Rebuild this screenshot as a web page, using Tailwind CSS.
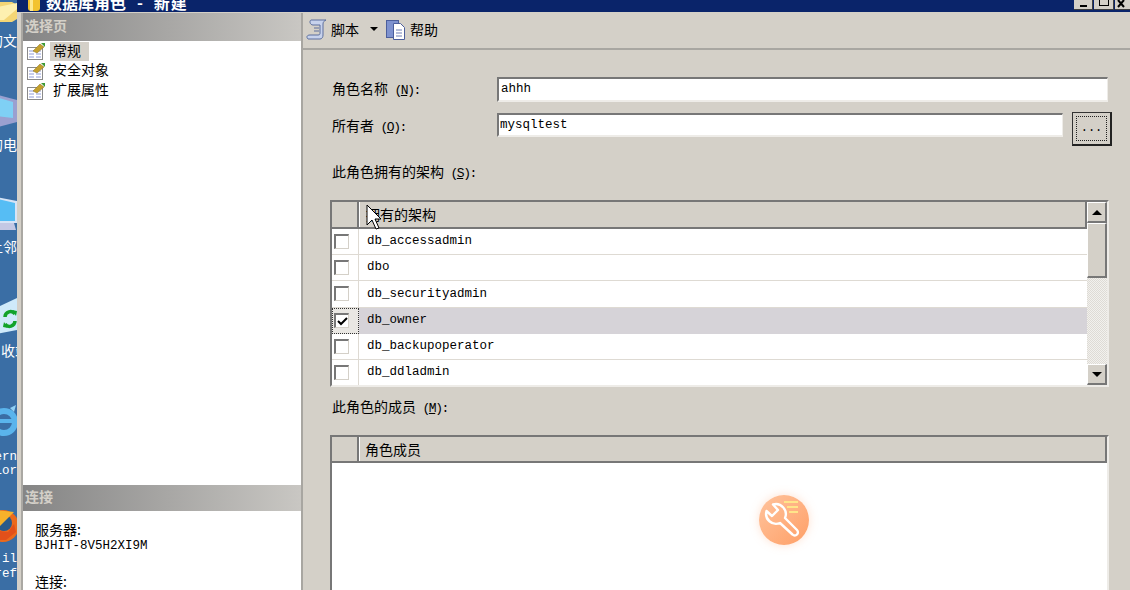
<!DOCTYPE html>
<html lang="zh-CN">
<head>
    <meta charset="UTF-8">
    <meta name="viewport" content="width=device-width" />
    <script src="https://cdn.jsdelivr.net/npm/@tailwindcss/browser@4"></script>
    <title>数据库角色 - 新建</title>
</head>
<body class="w-[1130px] h-[590px] overflow-hidden flex bg-[#d4d0c8] text-[14px] text-black font-['Noto_Sans_CJK_SC','Liberation_Sans',sans-serif]">

<!-- Desktop behind the window -->
<div class="relative w-[17px] h-full shrink-0 overflow-hidden bg-[#3a6ea5] text-white text-[14px] leading-[16px]">
    <svg class="absolute left-0 top-0" width="17" height="24" viewBox="0 0 17 24"><path d="M-8 2h20l5 3v14l-5 3H-8z" fill="#f4d675"/><path d="M-8 8 17 3v6L4 20H-8z" fill="#fdf0b0"/></svg>
    <span class="absolute right-0 top-[32px] whitespace-nowrap">的文</span>
    <svg class="absolute left-0 top-[92px]" width="17" height="40" viewBox="0 0 17 40"><path d="M-6 2 17 8v22L-6 36z" fill="#9aa0d0"/><path d="M-4 5 13 10v16L-4 24z" fill="#7fd0f5"/></svg>
    <span class="absolute right-0 top-[136px] whitespace-nowrap">的电</span>
    <svg class="absolute left-0 top-[195px]" width="17" height="40" viewBox="0 0 17 40"><path d="M-4 2 17 6v22H-4z" fill="#d7e4f6"/><path d="M-2 4 15 8v18H-2z" fill="#56bdf4"/><path d="M-6 28h20l2 7H-6z" fill="#c4c8e4"/></svg>
    <span class="absolute right-0 top-[238px] whitespace-nowrap">上邻</span>
    <svg class="absolute left-0 top-[298px]" width="17" height="38" viewBox="0 0 17 38"><path d="M-4 10 17 0v32L-4 36z" fill="#cfeafa"/><path d="M5 19a5.500 5.500 0 0 1 10-3M15 23a5.500 5.500 0 0 1-10 3" fill="none" stroke="#12a32a" stroke-width="3.500"/><path d="M12 12l5 1-1 5zM8 30l-5-1 1-5z" fill="#12a32a"/></svg>
    <span class="absolute left-[1px] top-[342px] whitespace-nowrap">收站</span>
    <svg class="absolute left-0 top-[403px]" width="17" height="38" viewBox="0 0 17 38"><circle cx="4" cy="19" r="11" fill="none" stroke="#5ab4ec" stroke-width="6"/><path d="M-4 18h17" stroke="#5ab4ec" stroke-width="4"/><path d="M10 5l6-3-2 7z" fill="#8fd0f5"/></svg>
    <div class="absolute right-0 top-[450px] font-['Liberation_Mono',monospace] text-[12.500px] leading-[14px] text-right"><div>ern</div><div>lor</div></div>
    <svg class="absolute left-0 top-[506px]" width="17" height="40" viewBox="0 0 17 40"><circle cx="3" cy="20" r="16" fill="#ec6a1c"/><circle cx="4" cy="17" r="8" fill="#2a5a8a"/><path d="M-6 4 14 6 8 12-2 22z" fill="#f7b12a"/><path d="M-8 24 8 26 14 18 16 26 6 34H-8z" fill="#e2501a"/></svg>
    <div class="absolute right-0 top-[552px] font-['Liberation_Mono',monospace] text-[12.500px] leading-[15px] text-right"><div>il</div><div>ref</div></div>
</div>

<!-- Dialog window -->
<div class="relative w-[1113px] h-full flex flex-col pl-[6px] bg-[#d4d0c8]">
    <!-- Title bar, cut off by the top of the picture -->
    <div class="h-[12px] -ml-[6px] mb-[1px] pl-[10px] flex justify-between overflow-hidden bg-[#0a246a] text-white">
        <div class="flex items-center gap-[5px] h-[20px] -mt-[8px] shrink-0">
            <svg width="14" height="20" viewBox="0 0 14 20"><rect x="1" y="0" width="12" height="19" rx="3" fill="#f2c230"/><rect x="3" y="0" width="3" height="19" fill="#fde890"/></svg>
            <span class="font-bold text-[16px] whitespace-pre">数据库角色   -   <span class="tracking-[1px]">新建</span></span>
        </div>
        <div class="flex gap-[1px] h-[10px] self-start shrink-0">
            <div class="w-[19px] h-[10px] bg-[#d4d0c8] border-r border-b border-[#404040] flex justify-center"><div class="w-[7px] h-[2px] mt-[5px] bg-black"></div></div>
            <div class="w-[20px] h-[10px] bg-[#d4d0c8] border-r border-b border-[#404040] flex justify-center"><div class="w-[10px] h-[6px] border-x border-b border-black"></div></div>
            <div class="w-[15px] h-[10px] bg-[#d4d0c8] border-b border-[#404040]"><svg width="15" height="9" viewBox="0 0 15 9"><path d="M3 0l6 7M9 0 3 7" stroke="#000" stroke-width="2"/></svg></div>
        </div>
    </div>

    <div class="flex-1 min-h-0 flex">
        <!-- Left pane -->
        <div class="w-[280px] -ml-[2px] shrink-0 flex flex-col bg-white border-l-2 border-[#aaa8a3]">
            <div class="h-[28px] pl-[2px] pb-[4px] flex items-center font-bold text-[14px] text-[#d4d0c8] bg-gradient-to-r from-[#858585] to-[#c9c7c3]">选择页</div>
            <ul class="flex-1 pl-[4px]">
                <li class="h-[20px] flex items-center">
                    <svg width="19" height="18" viewBox="0 0 19 18"><rect x="0.500" y="5.500" width="15" height="12" fill="#fff" stroke="#8a8a8a"/><path d="M2 9h5M9 9h5M2 12h5M9 12h5M2 15h5M9 15h5" stroke="#8f9bd8"/><path d="M6 9 13 2l4 3-7 6z" fill="#c4a02c" stroke="#8a7020" stroke-width="0.500"/><path d="M14 1h4v4z" fill="#3c9a35"/></svg>
                    <span class="ml-[4px] w-[39px] h-[19px] pl-[3px] leading-[17px] bg-[#d4d0c8]">常规</span>
                </li>
                <li class="h-[20px] flex items-center">
                    <svg width="19" height="18" viewBox="0 0 19 18"><rect x="0.500" y="5.500" width="15" height="12" fill="#fff" stroke="#8a8a8a"/><path d="M2 9h5M9 9h5M2 12h5M9 12h5M2 15h5M9 15h5" stroke="#8f9bd8"/><path d="M6 9 13 2l4 3-7 6z" fill="#c4a02c" stroke="#8a7020" stroke-width="0.500"/><path d="M14 1h4v4z" fill="#3c9a35"/></svg>
                    <span class="ml-[7px] mb-[3px] leading-[17px]">安全对象</span>
                </li>
                <li class="h-[20px] flex items-center">
                    <svg width="19" height="18" viewBox="0 0 19 18"><rect x="0.500" y="5.500" width="15" height="12" fill="#fff" stroke="#8a8a8a"/><path d="M2 9h5M9 9h5M2 12h5M9 12h5M2 15h5M9 15h5" stroke="#8f9bd8"/><path d="M6 9 13 2l4 3-7 6z" fill="#c4a02c" stroke="#8a7020" stroke-width="0.500"/><path d="M14 1h4v4z" fill="#3c9a35"/></svg>
                    <span class="ml-[7px] mb-[3px] leading-[17px]">扩展属性</span>
                </li>
            </ul>
            <div class="h-[26px] pl-[2px] pb-[4px] flex items-center font-bold text-[14px] text-[#d4d0c8] bg-gradient-to-r from-[#858585] to-[#c9c7c3]">连接</div>
            <div class="h-[79px] pl-[12px] pt-[9px]">
                <div class="leading-[18px]">服务器:</div>
                <div class="pt-[1px] font-['Liberation_Mono',monospace] text-[12.500px] leading-[14px]">BJHIT-8V5H2XI9M</div>
                <div class="mt-[19px] leading-[18px]">连接:</div>
            </div>
        </div>

        <!-- Right pane -->
        <div class="flex-1 min-w-0 border-l-2 border-[#a8a6a1] flex flex-col">
            <!-- Toolbar -->
            <div class="h-[37px] shrink-0 pl-[3px] pb-[3px] flex items-center border-b-2 border-[#a8a6a1]">
                <svg width="21" height="21" viewBox="0 0 21 21"><path d="M5 1h15c-2 1-3 2-3 4v11c0 2-1 4-3 4H2c-2-2-1-4 2-4h8c2 0 2-1 2-2V6H7C4 6 3 2 5 1z" fill="#c7d2ec" stroke="#5c6f9e"/><path d="M8 9h5M8 12h5" stroke="#5c6f9e"/></svg>
                <span class="ml-[4px]">脚本</span>
                <span class="ml-[11px] w-0 h-0 border-x-[4px] border-x-transparent border-t-[4px] border-t-black"></span>
                <svg class="ml-[8px]" width="21" height="21" viewBox="0 0 21 21"><rect x="0.500" y="1.500" width="12" height="17" fill="#7e92cf" stroke="#4c5f9c"/><path d="M7.500 4.500h7l4 4v12h-11z" fill="#fff" stroke="#4c5f9c"/><path d="M10 11h6M10 14h6M10 17h6" stroke="#6e7fb5"/></svg>
                <span class="ml-[3px]">帮助</span>
            </div>

            <div class="flex-1 min-h-0 overflow-hidden pl-[29px] pr-[22px]">
                <!-- Name and owner fields -->
                <div class="h-[25px] mt-[27px] flex items-center">
                    <label class="w-[165px] shrink-0 whitespace-pre pb-[1px]">角色名称<span class="font-['Liberation_Mono',monospace] text-[13px] tracking-[-1.400px]"> (<span class="underline">N</span>):</span></label>
                    <div class="flex-1 h-[25px] pl-[2px] flex items-center bg-white border-t-2 border-l-2 border-t-[#777] border-l-[#777] border-r border-b-2 border-r-[#eeece8] border-b-[#eeece8] font-['Liberation_Mono',monospace] text-[12.500px]">ahhh</div>
                </div>
                <div class="relative h-[24px] mt-[11px] pr-[45px] flex items-center">
                    <label class="w-[165px] shrink-0 whitespace-pre pt-[3px]">所有者<span class="font-['Liberation_Mono',monospace] text-[13px] tracking-[-1.400px]"> (<span class="underline">O</span>):</span></label>
                    <div class="flex-1 h-[24px] pl-[1px] flex items-center bg-white border-t-2 border-l-2 border-t-[#777] border-l-[#777] border-r border-b-2 border-r-[#eeece8] border-b-[#eeece8] font-['Liberation_Mono',monospace] text-[12.500px]">mysqltest</div>
                    <button class="absolute right-[-4px] top-[-1px] w-[40px] h-[34px] p-[3px] bg-[#d4d0c8] border-t border-l border-[#333] border-r-2 border-b-2 border-r-[#222] border-b-[#222]">
                        <span class="block w-full h-full border border-dotted border-[#222] text-[12px] leading-[22px] text-center font-['Liberation_Mono',monospace]">...</span>
                    </button>
                </div>

                <div class="h-[20px] mt-[24px] leading-[20px] whitespace-pre">此角色拥有的架构<span class="font-['Liberation_Mono',monospace] text-[13px] tracking-[-1.400px]"> (<span class="underline">S</span>):</span></div>

                <!-- Owned schemas -->
                <div class="mt-[19px] h-[187px] w-[779px] -ml-[2px] flex border-t-2 border-l-2 border-t-[#777] border-l-[#777] border-r-2 border-b-2 border-r-[#eeece8] border-b-[#eeece8] bg-white">
                    <div class="flex-1 min-w-0">
                        <div class="h-[27px] flex bg-[#d4d0c8] border-b-2 border-[#777]">
                            <div class="w-[27px] border-r-2 border-[#777]"></div>
                            <div class="flex-1 pl-[6px] border-l border-white border-r-2 border-r-[#777] leading-[24px]">拥有的架构</div>
                        </div>
                        <div class="h-[26.200px] flex items-center border-b border-[#dedad3]">
                            <div class="w-[27px] h-full pl-[2px] flex items-center border-r border-[#dedad3]"><span class="w-[15px] h-[15px] bg-white border-t-2 border-l-2 border-t-[#777] border-l-[#777] border-r border-b border-[#d4d0c8]"></span></div>
                            <span class="pl-[8px] font-['Liberation_Mono',monospace] text-[12.500px]">db_accessadmin</span>
                        </div>
                        <div class="h-[26.200px] flex items-center border-b border-[#dedad3]">
                            <div class="w-[27px] h-full pl-[2px] flex items-center border-r border-[#dedad3]"><span class="w-[15px] h-[15px] bg-white border-t-2 border-l-2 border-t-[#777] border-l-[#777] border-r border-b border-[#d4d0c8]"></span></div>
                            <span class="pl-[8px] font-['Liberation_Mono',monospace] text-[12.500px]">dbo</span>
                        </div>
                        <div class="h-[26.200px] flex items-center border-b border-[#dedad3]">
                            <div class="w-[27px] h-full pl-[2px] flex items-center border-r border-[#dedad3]"><span class="w-[15px] h-[15px] bg-white border-t-2 border-l-2 border-t-[#777] border-l-[#777] border-r border-b border-[#d4d0c8]"></span></div>
                            <span class="pl-[8px] font-['Liberation_Mono',monospace] text-[12.500px]">db_securityadmin</span>
                        </div>
                        <div class="h-[26.200px] flex items-center bg-[#d6d3d8]">
                            <div class="w-[27px] h-full pl-[1px] flex items-center bg-[#e9e7e3] border border-dotted border-[#333]">
                                <span class="w-[15px] h-[15px] flex items-center justify-center bg-white border-t-2 border-l-2 border-t-[#777] border-l-[#777] border-r border-b border-[#d4d0c8]"><svg width="11" height="9" viewBox="0 0 11 9"><path d="M1 4l3 3 6-6" fill="none" stroke="#000" stroke-width="2"/></svg></span>
                            </div>
                            <span class="pl-[8px] font-['Liberation_Mono',monospace] text-[12.500px]">db_owner</span>
                        </div>
                        <div class="h-[26.200px] flex items-center border-b border-[#dedad3]">
                            <div class="w-[27px] h-full pl-[2px] flex items-center border-r border-[#dedad3]"><span class="w-[15px] h-[15px] bg-white border-t-2 border-l-2 border-t-[#777] border-l-[#777] border-r border-b border-[#d4d0c8]"></span></div>
                            <span class="pl-[8px] font-['Liberation_Mono',monospace] text-[12.500px]">db_backupoperator</span>
                        </div>
                        <div class="h-[25px] flex items-center">
                            <div class="w-[27px] h-full pl-[2px] flex items-center border-r border-[#dedad3]"><span class="w-[15px] h-[15px] bg-white border-t-2 border-l-2 border-t-[#777] border-l-[#777] border-r border-b border-[#d4d0c8]"></span></div>
                            <span class="pl-[8px] font-['Liberation_Mono',monospace] text-[12.500px]">db_ddladmin</span>
                        </div>
                    </div>
                    <!-- Scroll bar -->
                    <div class="w-[20px] shrink-0 flex flex-col bg-[repeating-conic-gradient(#dedbd5_0_25%,#f2f1ee_0_50%)] bg-size-[2px_2px]">
                        <div class="h-[21px] flex items-center justify-center bg-[#d4d0c8] border-t border-l border-white border-r-2 border-b-2 border-r-[#777] border-b-[#777]"><span class="w-0 h-0 border-x-[5px] border-x-transparent border-b-[5px] border-b-black"></span></div>
                        <div class="h-[55px] bg-[#d4d0c8] border-t border-l border-white border-r-2 border-b-2 border-r-[#777] border-b-[#777]"></div>
                        <div class="flex-1"></div>
                        <div class="h-[21px] flex items-center justify-center bg-[#d4d0c8] border-t border-l border-white border-r-2 border-b-2 border-r-[#777] border-b-[#777]"><span class="w-0 h-0 border-x-[5px] border-x-transparent border-t-[5px] border-t-black"></span></div>
                    </div>
                </div>

                <div class="h-[20px] mt-[9px] leading-[20px] whitespace-pre">此角色的成员<span class="font-['Liberation_Mono',monospace] text-[13px] tracking-[-1.400px]"> (<span class="underline">M</span>):</span></div>

                <!-- Role members -->
                <div class="mt-[19px] h-[155px] w-[779px] -ml-[2px] border-t-2 border-l-2 border-t-[#777] border-l-[#777] border-r-2 border-r-[#eeece8] bg-white">
                    <div class="h-[26px] flex bg-[#d4d0c8] border-b-2 border-[#777]">
                        <div class="w-[27px] border-r-2 border-[#777]"></div>
                        <div class="flex-1 pl-[5px] border-l border-white border-r-2 border-r-[#777] leading-[24px]">角色成员</div>
                    </div>
                </div>
            </div>
        </div>
    </div>

    <!-- Mouse cursor -->
    <svg class="absolute left-[349px] top-[204px]" width="16" height="27" viewBox="0 0 16 27"><path d="M1 1v20l5-5 4 9 3-1-4-9h6z" fill="#fff" stroke="#000"/></svg>

    <!-- Floating tool badge -->
    <div class="absolute left-[742px] top-[495px] w-[50px] h-[50px] rounded-full flex items-center justify-center bg-gradient-to-br from-[#ffc39c] to-[#fe9f66] shadow-[0_0_10px_rgba(255,170,120,0.350)]">
        <svg width="50" height="50" viewBox="0 0 50 50"><path d="M25 7h14M28 12h11M30 17h9" stroke="#ffe58a" stroke-width="2"/><path d="M14 9.500A10 10 0 0 1 26 23L38 35a3 3 0 0 1-4.500 4.500L21 28A10 10 0 0 1 7.500 16L13 21l6-6z" fill="none" stroke="#fff" stroke-width="2.400" stroke-linejoin="round"/></svg>
    </div>
</div>
</body>
</html>
